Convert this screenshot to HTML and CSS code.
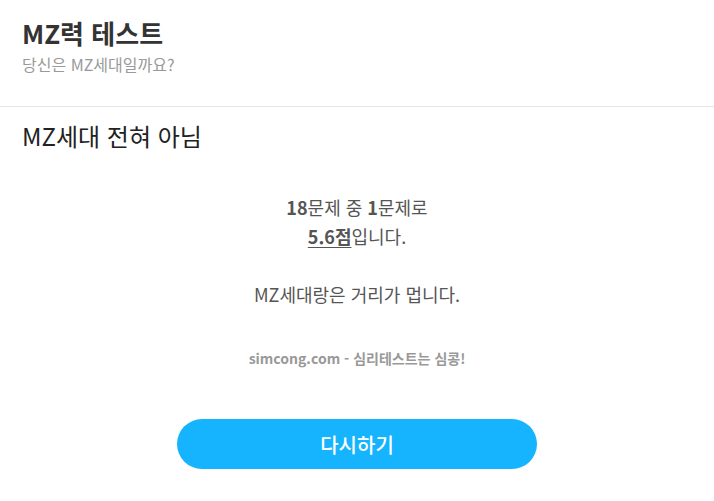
FILE: index.html
```html
<!DOCTYPE html>
<html lang="ko">
<head>
    <meta charset="UTF-8">
    <meta name="viewport" content="width=device-width, initial-scale=1.0">
    <title>MZ력 테스트</title>
    <link rel="stylesheet" href="styles.css">
</head>
<body>

    <div class="test-header">
        <h1 class="test-title">MZ력 테스트</h1>
        <p class="test-subtitle">당신은 MZ세대일까요?</p>
    </div>

    <div class="result-container">
        <h2 class="result-title">MZ세대 전혀 아님</h2>

        <div class="result-text">
            <p><b>18</b>문제 중 <b>1</b>문제로<br><u><b>5.6점</b></u>입니다.<br><br>MZ세대랑은 거리가 멉니다.</p>
        </div>

        <div class="credit">simcong.com - 심리테스트는 심콩!</div>

        <button class="btn btn-retry">다시하기</button>
    </div>

</body>
</html>
```

FILE: styles.css
```css
body {
    font-family: 'Noto Sans CJK KR', 'Noto Sans', sans-serif;
    background-color: #fff;
    margin: 0;
    padding: 0;
}

.test-header {
    padding: 14px 22px 0;
    height: 92px;
    border-bottom: 1px solid #e6e6e6;
}

.test-title {
    margin: 0;
    font-size: 26px;
    font-weight: bold;
    color: #333;
    line-height: 38px;
}

.test-subtitle {
    margin: 0;
    font-size: 16px;
    color: #999;
    line-height: 24px;
}

.result-container {
    padding: 0 22px;
}

.result-title {
    margin: 12px 0 0;
    font-size: 24px;
    font-weight: normal;
    color: #222;
    line-height: 34px;
}

.result-text {
    margin-top: 40px;
    text-align: center;
    color: #555;
    font-size: 18px;
    line-height: 29px;
}

.result-text p {
    margin: 0;
}

.result-text u {
    text-decoration-thickness: 1px;
    text-underline-offset: 3px;
}

.credit {
    margin-top: 40px;
    text-align: center;
    color: #999;
    font-size: 14px;
    font-weight: bold;
    line-height: 19px;
}

.btn {
    border: none;
    cursor: pointer;
    font-family: inherit;
}

.btn-retry {
    display: block;
    width: 360px;
    height: 50px;
    margin: 51px auto 0;
    border-radius: 25px;
    background-color: #16b4fe;
    color: white;
    font-size: 20px;
    font-weight: 500;
}
```
